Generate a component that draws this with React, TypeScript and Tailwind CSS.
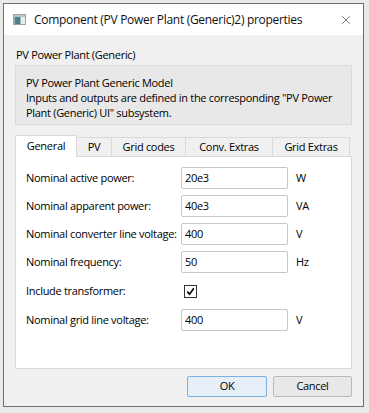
import { X } from 'lucide-react';

type Row = {
  label: string;
  value?: string;
  unit?: string;
  checkbox?: boolean;
};

const rows: Row[] = [
  { label: 'Nominal active power:', value: '20e3', unit: 'W' },
  { label: 'Nominal apparent power:', value: '40e3', unit: 'VA' },
  { label: 'Nominal converter line voltage:', value: '400', unit: 'V' },
  { label: 'Nominal frequency:', value: '50', unit: 'Hz' },
  { label: 'Include transformer:', checkbox: true },
  { label: 'Nominal grid line voltage:', value: '400', unit: 'V' },
];

const tabs = [
  { name: 'General', width: 'w-[62px]' },
  { name: 'PV', width: 'w-[36px]' },
  { name: 'Grid codes', width: 'w-[75px]' },
  { name: 'Conv. Extras', width: 'w-[88px]' },
  { name: 'Grid Extras', width: 'w-[78px]' },
];

function WindowIcon() {
  return (
    <svg width="13" height="11" viewBox="0 0 13 11" className="shrink-0">
      <rect x="0.5" y="0.5" width="12" height="10" fill="#e8ecef" stroke="#9aa3a8" />
      <rect x="1" y="1" width="11" height="2" fill="#b9c3c9" />
      <rect x="1.5" y="3" width="6" height="7" fill="#4f7f8c" />
    </svg>
  );
}

export default function App() {
  return (
    <div
      className="h-[413px] w-[369px] bg-[#e9e9e9] p-[3px] pr-[5px] text-[11px] tracking-[-0.3px] text-black"
      style={{ fontFamily: '"Segoe UI", "Open Sans", "Noto Sans", sans-serif' }}
    >
      <div className="flex h-[404px] w-[361px] flex-col border border-[#6f6f6f] bg-[#f0f0f0]">
        {/* title bar */}
        <div className="flex h-[31px] shrink-0 items-center bg-white pl-[9px] pr-[10px]">
          <WindowIcon />
          <span className="ml-[8px] flex-1 truncate text-[12px] tracking-[-0.3px] text-[#111]">
            Component (PV Power Plant (Generic)2) properties
          </span>
          <X size={14} strokeWidth={1} className="text-[#222]" />
        </div>

        <div className="flex flex-1 flex-col px-[11px] pt-[12px]">
          <p className="pl-[1px] leading-[15px]">PV Power Plant (Generic)</p>

          <div className="mt-[3px] h-[60px] whitespace-nowrap border border-[#dadada] bg-[#e8e8e8] pl-[10px] pr-[8px] pt-[9px] leading-[15px]">
            PV Power Plant Generic Model
            <br />
            Inputs and outputs are defined in the corresponding "PV Power
            <br />
            Plant (Generic) UI" subsystem.
          </div>

          {/* tabs */}
          <div className="relative z-10 mt-[10px] flex h-[22px] items-end">
            {tabs.map((tab, i) => {
              const active = i === 0;
              return (
                <div
                  key={tab.name}
                  className={
                    active
                      ? `${tab.width} flex h-[22px] items-center justify-center border border-b-0 border-[#d9d9d9] bg-white pb-[1px]`
                      : `${tab.width} -ml-px flex h-[20px] items-center justify-center border border-[#d9d9d9] bg-[#f0f0f0]`
                  }
                >
                  {tab.name}
                </div>
              );
            })}
          </div>

          <div className="-mt-px h-[213px] border border-[#d9d9d9] bg-white pl-[10px] pt-[7px]">
            {rows.map((row) => (
              <div
                key={row.label}
                className={`flex items-center ${row.checkbox ? 'h-[30px]' : 'h-[28px]'}`}
              >
                <span className="w-[155px] whitespace-nowrap">{row.label}</span>
                {row.checkbox ? (
                  <div className="ml-[3px] flex h-[13px] w-[13px] items-center justify-center border border-[#333] bg-white">
                    <svg width="9" height="9" viewBox="0 0 9 9">
                      <path d="M1.3 4.6 L3.6 7.2 L7.8 1.3" fill="none" stroke="#000" strokeWidth="1.6" />
                    </svg>
                  </div>
                ) : (
                  <>
                    <div className="flex h-[22px] w-[107px] items-center rounded-[2px] border border-[#c7c7c7] bg-white pl-[3px]">
                      {row.value}
                    </div>
                    <span className="ml-[8px]">{row.unit}</span>
                  </>
                )}
              </div>
            ))}
          </div>

          <div className="mt-[7px] flex justify-end gap-[6px]">
            <button className="h-[21px] w-[80px] rounded-[2px] border border-[#7ab1e4] bg-[#e6eef7] text-[11px]">
              OK
            </button>
            <button className="h-[21px] w-[79px] rounded-[2px] border border-[#b9b9b9] bg-[#e8e8e8] text-[11px]">
              Cancel
            </button>
          </div>
        </div>
      </div>
    </div>
  );
}
